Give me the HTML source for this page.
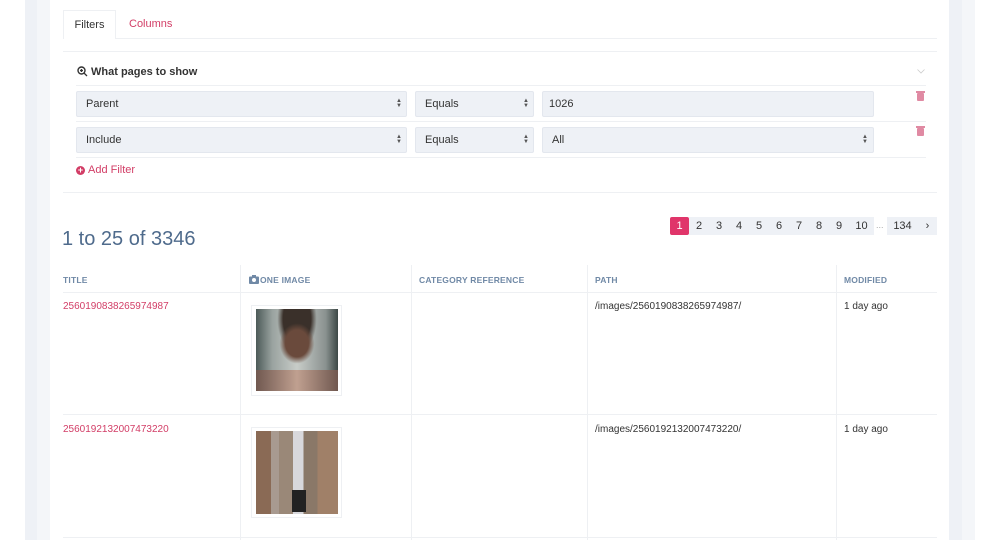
<!DOCTYPE html>
<html><head><meta charset="utf-8"><style>
*{margin:0;padding:0;box-sizing:border-box}
body{width:1000px;height:540px;overflow:hidden;background:#fff;font-family:"Liberation Sans",sans-serif;font-size:11px;color:#333;position:relative}
.a{position:absolute}
.sel{position:absolute;background:#eef1f6;border:1px solid #e3e7ee;border-radius:2px;padding-left:9px;line-height:24px;color:#333;font-size:11px}
.hl{position:absolute;height:1px;background:#eef0f3}
.vl{position:absolute;width:1px;background:#eef0f3}
.th{position:absolute;top:275px;font-size:8.5px;font-weight:bold;color:#7089a6;letter-spacing:.2px}
.pg{position:absolute;top:217px;height:18px;line-height:18px;text-align:center;background:#eef1f6;color:#333;font-size:11px}
.pink{color:#d23d66}
.trash{position:absolute;width:7px;height:8px;background:#e08aa3;border-radius:1px}
.trash:before{content:"";position:absolute;left:-1px;top:-2px;width:9px;height:1.5px;background:#e08aa3}
.ar{position:absolute;font-size:6px;line-height:5px;color:#555}
</style></head><body>
<div class="a" style="left:25px;top:0;width:12px;height:540px;background:#eef1f6"></div>
<div class="a" style="left:37px;top:0;width:13px;height:540px;background:#f4f6f9"></div>
<div class="a" style="left:949px;top:0;width:13px;height:540px;background:#eef1f6"></div>
<div class="a" style="left:962px;top:0;width:13px;height:540px;background:#f4f6f9"></div>

<div class="a" style="left:63px;top:10px;width:53px;height:29px;border:1px solid #eef0f3;border-bottom:none;background:#fff;line-height:28px;text-align:center;color:#333">Filters</div>
<div class="a pink" style="left:129px;top:18px">Columns</div>
<div class="hl" style="left:116px;top:38px;width:821px"></div>
<div class="hl" style="left:63px;top:51px;width:874px"></div>

<svg class="a" style="left:77px;top:66px" width="11" height="11" viewBox="0 0 11 11"><circle cx="4.5" cy="4.5" r="3.5" fill="none" stroke="#333" stroke-width="1.4"/><path d="M7 7l3 3M4.5 3v3M3 4.5h3" stroke="#333" stroke-width="1.3"/></svg>
<div class="a" style="left:91px;top:66px;font-weight:bold;color:#333;font-size:11px">What pages to show</div>
<svg class="a" style="left:917px;top:69px" width="8" height="5" viewBox="0 0 8 5"><path d="M0.5 0.5L4 4 7.5 0.5" fill="none" stroke="#ccc" stroke-width="0.8"/></svg>
<div class="hl" style="left:76px;top:85px;width:850px"></div>

<div class="sel" style="left:76px;top:91px;width:331px;height:26px">Parent</div>
<div class="sel" style="left:415px;top:91px;width:119px;height:26px">Equals</div>
<div class="sel" style="left:542px;top:91px;width:332px;height:26px;padding-left:6px">1026</div>
<div class="hl" style="left:76px;top:121px;width:850px"></div>
<div class="sel" style="left:76px;top:127px;width:331px;height:26px">Include</div>
<div class="sel" style="left:415px;top:127px;width:119px;height:26px">Equals</div>
<div class="sel" style="left:542px;top:127px;width:332px;height:26px">All</div>
<div class="hl" style="left:76px;top:157px;width:850px"></div>
<div class="ar" style="left:396px;top:99px">&#9650;<br>&#9660;</div>
<div class="ar" style="left:523px;top:99px">&#9650;<br>&#9660;</div>
<div class="ar" style="left:396px;top:135px">&#9650;<br>&#9660;</div>
<div class="ar" style="left:523px;top:135px">&#9650;<br>&#9660;</div>
<div class="ar" style="left:862px;top:135px">&#9650;<br>&#9660;</div>
<div class="trash" style="left:917px;top:93px"></div>
<div class="trash" style="left:917px;top:128px"></div>

<div class="a" style="left:76px;top:166px;width:9px;height:9px;border-radius:50%;background:#d23d66;color:#fff;font-size:9px;line-height:9px;text-align:center;font-weight:bold">+</div>
<div class="a pink" style="left:88px;top:164px;font-size:11px">Add Filter</div>
<div class="hl" style="left:63px;top:192px;width:874px"></div>

<div class="a" style="left:62px;top:228px;font-size:20px;color:#4f6b8c">1 to 25 of 3346</div>

<div class="pg" style="left:670px;width:19px;background:#e0356a;color:#fff;border-radius:2px">1</div>
<div class="pg" style="left:689px;width:20px">2</div>
<div class="pg" style="left:709px;width:20px">3</div>
<div class="pg" style="left:729px;width:20px">4</div>
<div class="pg" style="left:749px;width:20px">5</div>
<div class="pg" style="left:769px;width:20px">6</div>
<div class="pg" style="left:789px;width:20px">7</div>
<div class="pg" style="left:809px;width:20px">8</div>
<div class="pg" style="left:829px;width:20px">9</div>
<div class="pg" style="left:849px;width:25px">10</div>
<div class="a" style="left:876px;top:220px;color:#aaa;font-size:9px">...</div>
<div class="pg" style="left:887px;width:31px">134</div>
<div class="pg" style="left:918px;width:19px">&#8250;</div>

<div class="th" style="left:63px">TITLE</div>
<svg class="a" style="left:249px;top:275px" width="10" height="9" viewBox="0 0 10 9"><rect x="0" y="1.5" width="10" height="7.5" rx="1" fill="#7089a6"/><rect x="3" y="0" width="4" height="2" fill="#7089a6"/><circle cx="5" cy="5" r="2" fill="#fff"/></svg>
<div class="th" style="left:260px">ONE IMAGE</div>
<div class="th" style="left:419px">CATEGORY REFERENCE</div>
<div class="th" style="left:595px">PATH</div>
<div class="th" style="left:844px">MODIFIED</div>
<div class="vl" style="left:240px;top:265px;height:275px"></div>
<div class="vl" style="left:411px;top:265px;height:275px"></div>
<div class="vl" style="left:587px;top:265px;height:275px"></div>
<div class="vl" style="left:836px;top:265px;height:275px"></div>
<div class="hl" style="left:63px;top:292px;width:874px"></div>
<div class="hl" style="left:63px;top:414px;width:874px"></div>
<div class="hl" style="left:63px;top:537px;width:874px"></div>

<div class="a pink" style="left:63px;top:301px;font-size:10px">2560190838265974987</div>
<div class="a" style="left:595px;top:301px;font-size:10px">/images/2560190838265974987/</div>
<div class="a" style="left:844px;top:301px;font-size:10px">1 day ago</div>
<div class="a pink" style="left:63px;top:424px;font-size:10px">2560192132007473220</div>
<div class="a" style="left:595px;top:424px;font-size:10px">/images/2560192132007473220/</div>
<div class="a" style="left:844px;top:424px;font-size:10px">1 day ago</div>

<div class="a" style="left:251px;top:305px;width:91px;height:91px;border:1px solid #eef0f3"></div>
<div class="a" style="left:256px;top:309px;width:82px;height:82px;background:radial-gradient(ellipse at 50% 42%,#6a4a3c 0 20%,transparent 30%),radial-gradient(ellipse at 50% 12%,#3a302a 0 24%,transparent 34%),linear-gradient(90deg,#4c5a58 0,#9aa3a0 20%,#c8ccc8 50%,#8a9290 85%,#3c4846 100%)"></div>
<div class="a" style="left:256px;top:370px;width:82px;height:21px;background:linear-gradient(90deg,#705850,#c0a090 50%,#705850)"></div>
<div class="a" style="left:251px;top:427px;width:91px;height:91px;border:1px solid #eef0f3"></div>
<div class="a" style="left:256px;top:431px;width:82px;height:83px;background:linear-gradient(90deg,#8a6a55 0 18%,#a89a90 18% 28%,#9a8878 28% 45%,#d8d8dc 45% 58%,#8a7868 58% 75%,#a08068 75% 100%)"></div>
<div class="a" style="left:292px;top:490px;width:14px;height:22px;background:#222"></div>
</body></html>
